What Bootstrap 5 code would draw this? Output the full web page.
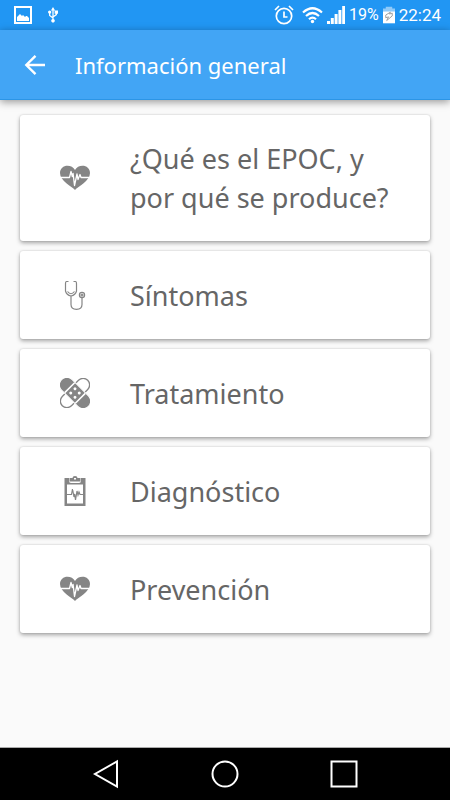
<!DOCTYPE html>
<html lang="es">
<head>
<meta charset="utf-8">
<meta name="viewport" content="width=device-width, initial-scale=1">
<title>Información general</title>
<link href="https://cdn.jsdelivr.net/npm/bootstrap@5.3.0/dist/css/bootstrap.min.css" rel="stylesheet">
<style>
  body { background: #fafafa; font-family: "Noto Sans", "Open Sans", sans-serif; }
  .status-bar { background: #2196f3; height: 30px; padding: 0 9px 0 14px; font: 17px/30px Roboto, sans-serif; }
  .status-bar .battery-level { font-size: 16px; }
  .app-bar { background: #42a5f5; height: 70px; padding: 0 20px; gap: 25px; box-shadow: 0 2px 8px rgba(0,0,0,.4); border-bottom: 1px solid #2c95e6; }
  .app-title { font-size: 22px; line-height: 32px; }
  .topics { padding: 15px 20px; gap: 10px; }
  .topic { border-radius: 3px; padding: 24px 24px 24px 40px; gap: 40px; color: #666; font-size: 27px; line-height: 39px; min-height: 88px; box-shadow: 0 2px 4px rgba(0,0,0,.34), 0 0 2px rgba(0,0,0,.14); }
  .topic:hover { color: #444; }
  .topic svg { color: #858585; }
  .nav-keys { height: 53px; padding: 0 91px; border-top: 1px solid #aaa; }
  svg { display: block; flex-shrink: 0; }
</style>
<script src="https://cdn.jsdelivr.net/npm/bootstrap@5.3.0/dist/js/bootstrap.bundle.min.js"></script>
</head>
<body class="d-flex flex-column min-vh-100">

<svg width="0" height="0" class="position-absolute" aria-hidden="true">
  <symbol id="heart-pulse" viewBox="0 0 30 30">
    <path fill="currentColor" d="M15 27C12 23.500 0 18 0 10 0 5.500 3.500 2.800 7.500 2.800c3.200 0 6 1.500 7.500 4.200 1.500-2.700 4.300-4.200 7.500-4.200C26.500 2.800 30 5.500 30 10c0 8-12 13.500-15 17z"/>
    <path fill="none" stroke="#fff" stroke-width="1.300" stroke-linejoin="round" d="M1 14.500h8.500l1.500-6 1.300 5 .8-3 1.400 12 2.500-11.500 1 5.500 2-5 1 3H29"/>
  </symbol>
</svg>

<div class="status-bar d-flex align-items-center justify-content-between text-white">
  <div class="d-flex align-items-center gap-3">
    <svg width="18" height="18" viewBox="0 0 18 18" role="img" aria-label="Captura"><path fill="none" stroke="#fff" stroke-width="2" d="M1 1h16v16H1z"/><path fill="#fff" d="M3 15v-4l3-3 2 2 1-1 2 2 1-1h1l2 2v3z"/></svg>
    <svg width="10" height="18" viewBox="0 0 12 19" role="img" aria-label="USB"><path fill="none" stroke="#fff" stroke-width="1.500" d="M6 2v15M2 6v4l4 3M10 6v3l-4 3"/><path fill="#fff" d="M6 0l2.500 4h-5zM8 4h4v4H8zM0 6a2 2 0 1 1 4 0 2 2 0 0 1-4 0z"/><circle cx="6" cy="16.500" r="2.200" fill="#fff"/></svg>
  </div>
  <div class="d-flex align-items-center">
    <svg class="me-2" width="20" height="20" viewBox="0 0 20 20" fill="none" stroke="#fff" stroke-width="1.700" role="img" aria-label="Alarma"><circle cx="10" cy="11" r="7.700"/><path d="M10 6.500V12h3.500M1 5l4-4M19 5l-4-4"/></svg>
    <svg class="me-1" width="21" height="18" viewBox="0 0 21 18" fill="none" stroke="#fff" stroke-width="2.200" role="img" aria-label="Wi-Fi"><path d="M1 6.500Q10.500-2 20 6.500M4 10q6.500-6 13 0M7 13.200q3.500-3.200 7 0"/><circle cx="10.500" cy="15.500" r="1.700" fill="#fff" stroke="none"/></svg>
    <svg class="me-1" width="18" height="18" viewBox="0 0 18 18" fill="#fff" role="img" aria-label="Señal"><path d="M0 15h3v3H0zM3.800 12h3v6h-3zM7.600 8h3v10h-3zM11.400 4h3v14h-3zM15.200 0H18v18h-2.800z"/></svg>
    <span class="battery-level">19%</span>
    <svg class="mx-1" width="12" height="18" viewBox="0 0 13 18" role="img" aria-label="Batería"><path fill="#90caf9" d="M3 0h7v2h3v3H0V2h3z"/><path fill="#fff" d="M0 5h13v13H0z"/><path fill="none" stroke="#999" d="M8 6L3 9v3l3-1-2 4 6-5V7l-3 1z"/></svg>
    <span>22:24</span>
  </div>
</div>

<header class="app-bar d-flex align-items-center text-white">
  <button type="button" class="btn p-1 border-0 text-white" aria-label="Volver">
    <svg width="22" height="22" viewBox="0 0 22 22" fill="none" stroke="currentColor" stroke-width="2.400"><path d="M21 11H3M11.500 1.800L2.300 11l9.200 9.200"/></svg>
  </button>
  <h1 class="app-title fw-normal mb-0">Información general</h1>
</header>

<main class="topics d-flex flex-column flex-grow-1">
  <a href="#epoc" class="topic d-flex align-items-center bg-white text-decoration-none">
    <svg width="30" height="30" aria-hidden="true"><use href="#heart-pulse"/></svg>
    <span>¿Qué es el EPOC, y por qué se produce?</span>
  </a>
  <a href="#sintomas" class="topic d-flex align-items-center bg-white text-decoration-none">
    <svg width="30" height="30" viewBox="0 0 30 30" fill="none" stroke="currentColor" stroke-width="1.200" aria-hidden="true"><path d="M8.500 1.500H6.500Q5.500 1.500 5.500 4v7q1 4 5.500 5 4.500-1 5.500-5V4q0-2.500-1-2.500h-2M7.500 11.500q3.500 4.500 7 0M11 16v8.500Q11 29.300 16.500 29.300T22 24.500V18"/><circle cx="22" cy="15" r="2.600"/><circle cx="22" cy="15" r="1"/></svg>
    <span>Síntomas</span>
  </a>
  <a href="#tratamiento" class="topic d-flex align-items-center bg-white text-decoration-none">
    <svg width="30" height="30" viewBox="0 0 30 30" aria-hidden="true">
      <g transform="rotate(-45 15 15)"><rect x="-3" y="8.500" width="36" height="13" rx="6.500" fill="#fff" stroke="currentColor" stroke-width="1.300"/></g>
      <g transform="rotate(45 15 15)"><rect x="-4" y="7.500" width="38" height="15" rx="7.500" fill="currentColor" stroke="#fff"/><path stroke="#fff" stroke-width="1.500" d="M7.500 8v14M22.500 8v14"/><g fill="#fff"><circle cx="12" cy="12" r="1.500"/><circle cx="18" cy="12" r="1.500"/><circle cx="12" cy="18" r="1.500"/><circle cx="18" cy="18" r="1.500"/></g></g>
    </svg>
    <span>Tratamiento</span>
  </a>
  <a href="#diagnostico" class="topic d-flex align-items-center bg-white text-decoration-none">
    <svg width="30" height="30" viewBox="0 0 30 30" aria-hidden="true"><path fill="currentColor" fill-rule="evenodd" d="M4.500 2H9v3q0 2 2 2h8q2 0 2-2V2h4.500v28h-21zM7 8.500v19h16v-19z"/><path fill="currentColor" fill-rule="evenodd" d="M9.500 2h3Q12.500 0 15 0t2.500 2h3v3.500h-11zM14 2v1.500h2V2z"/><path fill="none" stroke="currentColor" stroke-width="1.200" d="M7 18.500h4.500l1-5.500 1.500 8 .7-3 .8 6 1.500-9 1 4 1-3 1 2.500h3"/></svg>
    <span>Diagnóstico</span>
  </a>
  <a href="#prevencion" class="topic d-flex align-items-center bg-white text-decoration-none">
    <svg width="30" height="30" aria-hidden="true"><use href="#heart-pulse"/></svg>
    <span>Prevención</span>
  </a>
</main>

<nav class="nav-keys bg-black d-flex align-items-center justify-content-between" aria-label="Sistema">
  <button type="button" class="btn p-0 border-0" aria-label="Atrás"><svg width="30" height="30" viewBox="0 0 30 30" fill="none" stroke="#fff" stroke-width="2"><path d="M26 2.500v25L4 15z"/></svg></button>
  <button type="button" class="btn p-0 border-0" aria-label="Inicio"><svg width="30" height="30" viewBox="0 0 30 30" fill="none" stroke="#fff" stroke-width="2"><circle cx="15" cy="15" r="12.500"/></svg></button>
  <button type="button" class="btn p-0 border-0" aria-label="Recientes"><svg width="30" height="30" viewBox="0 0 30 30" fill="none" stroke="#fff" stroke-width="2"><path d="M2.500 2.500h25v25h-25z"/></svg></button>
</nav>
</body>
</html>
